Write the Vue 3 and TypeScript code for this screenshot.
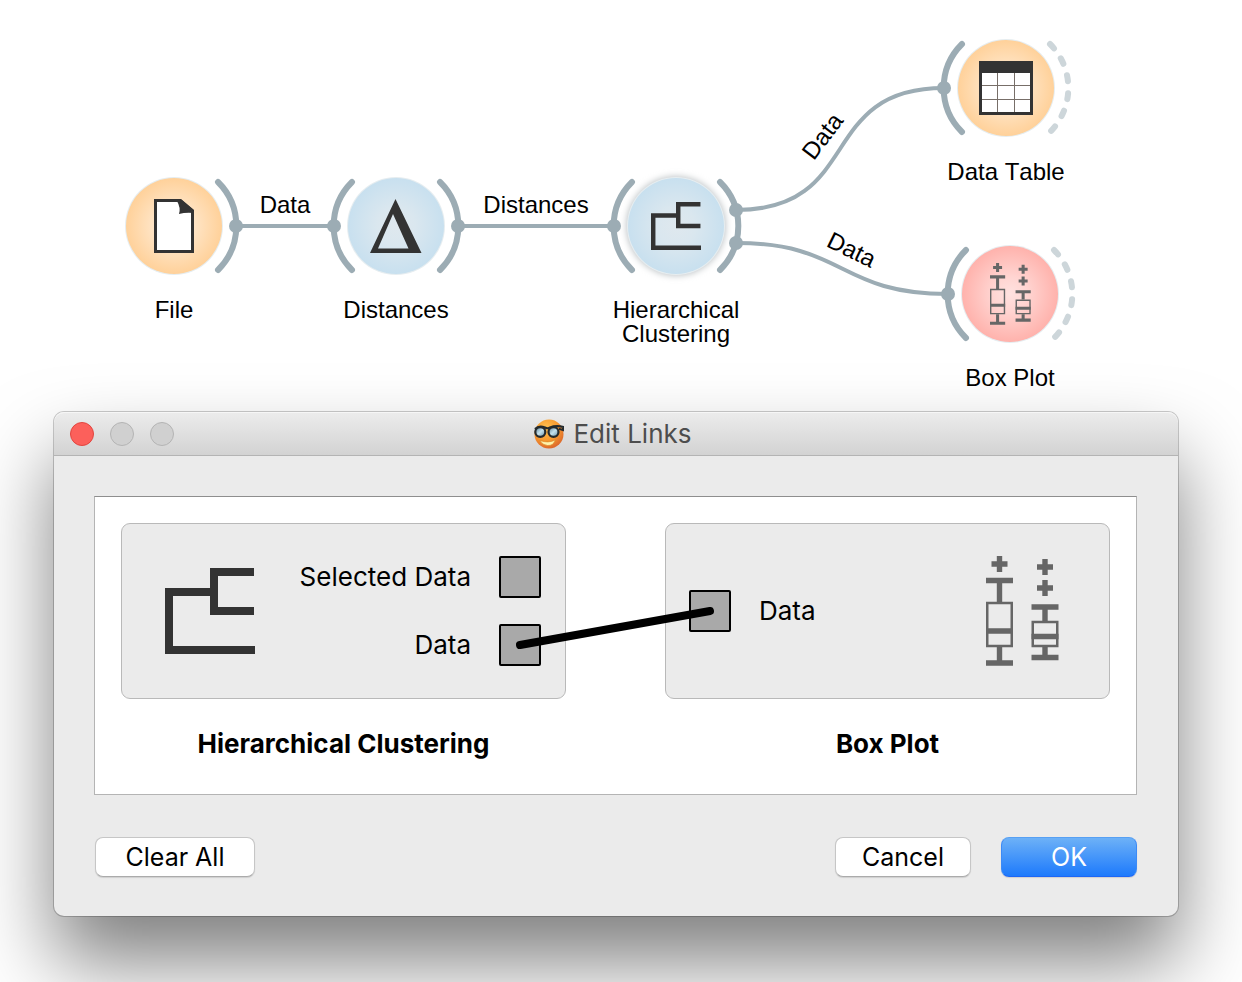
<script setup lang="ts">
type IconName = 'file' | 'delta' | 'tree' | 'table' | 'box'
type Side = 'none' | 'solid' | 'dashed'

interface CanvasNode {
  id: string
  x: number
  y: number
  tone: 'orange' | 'blue' | 'pink'
  icon: IconName
  lines: string[]
  input: boolean
  output: Side
  anchors: number[][]
  selected?: boolean
}

interface CanvasLink {
  d: string
  label: string
  labelAt: string
}

const nodes: CanvasNode[] = [
  { id: 'file', x: 174, y: 226, tone: 'orange', icon: 'file', lines: ['File'], input: false, output: 'solid', anchors: [[62, 0]] },
  { id: 'distances', x: 396, y: 226, tone: 'blue', icon: 'delta', lines: ['Distances'], input: true, output: 'solid', anchors: [[-62, 0], [62, 0]] },
  { id: 'clustering', x: 676, y: 226, tone: 'blue', icon: 'tree', lines: ['Hierarchical', 'Clustering'], input: true, output: 'solid', anchors: [[-62, 0], [60, -16], [60, 17]], selected: true },
  { id: 'table', x: 1006, y: 88, tone: 'orange', icon: 'table', lines: ['Data Table'], input: true, output: 'dashed', anchors: [[-62, 0]] },
  { id: 'box', x: 1010, y: 294, tone: 'pink', icon: 'box', lines: ['Box Plot'], input: true, output: 'dashed', anchors: [[-62, 0]] }
]

const links: CanvasLink[] = [
  { d: 'M236 226H334', label: 'Data', labelAt: 'translate(285 213)' },
  { d: 'M458 226H614', label: 'Distances', labelAt: 'translate(536 213)' },
  { d: 'M736 210C864 210 816 88 944 88', label: 'Data', labelAt: 'translate(829 141) rotate(-53)' },
  { d: 'M736 243C846 243 838 294 948 294', label: 'Data', labelAt: 'translate(848 257) rotate(26)' }
]
</script>

<template>
  <main class="page">
    <svg class="canvas" role="img" aria-label="Workflow">
      <defs>
        <radialGradient id="tone-orange">
          <stop offset="0" stop-color="#fff0dd" />
          <stop offset="0.35" stop-color="#ffe7cb" />
          <stop offset="1" stop-color="#ffd19a" />
        </radialGradient>
        <radialGradient id="tone-blue">
          <stop offset="0" stop-color="#dfe8ee" />
          <stop offset="0.4" stop-color="#dae7ef" />
          <stop offset="1" stop-color="#c8e0ef" />
        </radialGradient>
        <radialGradient id="tone-pink">
          <stop offset="0" stop-color="#ffe2e0" />
          <stop offset="0.35" stop-color="#ffd5d2" />
          <stop offset="1" stop-color="#ffb2ac" />
        </radialGradient>
        <filter id="glow" x="-20%" y="-20%" width="140%" height="140%">
          <feGaussianBlur stdDeviation="3" />
        </filter>
        <symbol id="icon-tree" viewBox="0 0 90 86">
          <path d="M90 82H4V24H49M89 4H49V43H89" fill="none" stroke="#333" stroke-width="8" />
        </symbol>
        <symbol id="icon-box" viewBox="0 0 73 110">
          <g fill="none" stroke="#666">
            <path stroke-width="5.400" d="M13.500 0V16M5.500 8H21.500M0 24.500H27M13.500 27V46M0 75H27M13.500 91V105M0 107H27" />
            <path stroke-width="5.400" d="M59 3V19M51 11H67M59 24V40M51 32H67M45.500 51H72.500M59 53V65M45.500 80.500H72.500M59 91V100M45.500 101.500H72.500" />
            <path stroke-width="2.500" d="M1.250 47H25.750V90H1.250ZM46.750 66H71.250V90H46.750Z" />
          </g>
        </symbol>
      </defs>

      <path v-for="link in links" :key="link.d" class="wire" :d="link.d" />

      <g v-for="node in nodes" :key="node.id" :transform="`translate(${node.x} ${node.y})`">
        <circle v-if="node.selected" r="50" fill="#c3c8ca" filter="url(#glow)" />
        <circle r="49" fill="#e6edf0" />
        <circle r="48" :fill="`url(#tone-${node.tone})`" />
        <path v-if="node.input" class="arc" d="M-44 -44A62 62 0 0 0 -44 44" />
        <path class="arc" :class="{ dashed: node.output === 'dashed' }" d="M44 -44A62 62 0 0 1 44 44" />
        <circle v-for="(a, i) in node.anchors" :key="i" :cx="a[0]" :cy="a[1]" r="7" fill="#9cacb4" />

        <g v-if="node.icon === 'file'">
          <path d="M-18.500 -25.500H6L18.500 -15V25.500H-18.500Z" fill="#fff" stroke="#333" stroke-width="3" />
          <path d="M3 -27H7L20 -16V-13Q12 -14 5 -12Q7 -18 3 -25Z" fill="#333" />
        </g>
        <path v-else-if="node.icon === 'delta'" fill="#333" fill-rule="evenodd" d="M-0.500 -27L25.500 27H-26ZM-3 -12L-18 22.500H12.500Z" />
        <use v-else-if="node.icon === 'tree'" href="#icon-tree" x="-25" y="-24" width="50" height="48" />
        <g v-else-if="node.icon === 'table'">
          <path d="M-27 -27H27V27H-27Z" fill="#333" />
          <path d="M-24 -15H24V24H-24Z" fill="#fff" />
          <path d="M-8.500 -15V24M8.500 -15V24M-24 -2.500H24M-24 11.500H24" stroke="#776e68" fill="none" />
        </g>
        <use v-else href="#icon-box" x="-20" y="-31" width="41" height="62" />

        <text v-for="(line, i) in node.lines" :key="line" class="caption" x="0" :y="92 + i * 24">{{ line }}</text>
      </g>

      <text v-for="link in links" :key="link.labelAt" class="caption" :transform="link.labelAt">{{ link.label }}</text>
    </svg>

    <section class="dialog" role="dialog" aria-labelledby="dialog-title">
      <header class="titlebar">
        <div class="lights">
          <button type="button" class="light close" aria-label="Close"></button>
          <button type="button" class="light" aria-label="Minimize" disabled></button>
          <button type="button" class="light" aria-label="Zoom" disabled></button>
        </div>
        <div class="title">
          <svg class="logo" viewBox="0 0 30 30" aria-hidden="true">
            <defs>
              <radialGradient id="face" cx="0.4" cy="0.3" r="0.75">
                <stop offset="0" stop-color="#ffc251" />
                <stop offset="0.55" stop-color="#f79a30" />
                <stop offset="1" stop-color="#d9622a" />
              </radialGradient>
              <linearGradient id="lens" x1="0" y1="0" x2="1" y2="1">
                <stop offset="0" stop-color="#557c93" />
                <stop offset="0.5" stop-color="#c5e2ee" />
                <stop offset="1" stop-color="#5f8ba4" />
              </linearGradient>
            </defs>
            <circle cx="15" cy="15" r="14.500" fill="url(#face)" />
            <path d="M6 21.500Q14 24.500 21.500 21Q19 27 13.500 26.500Q8 26 6 21.500Z" fill="#fff3ac" stroke="#d58320" stroke-width="0.600" />
            <path d="M1 10Q5 6 11 8.500Q14 10 16 8.500Q22 6 29.500 8L29 11Q26 10 25 10" fill="none" stroke="#252b2e" stroke-width="2.200" />
            <ellipse cx="6.300" cy="13" rx="5" ry="4.800" fill="url(#lens)" stroke="#252b2e" stroke-width="2.200" />
            <ellipse cx="19.500" cy="13" rx="5" ry="4.800" fill="url(#lens)" stroke="#252b2e" stroke-width="2.200" />
          </svg>
          <h1 id="dialog-title">Edit Links</h1>
        </div>
      </header>

      <div class="body">
        <div class="board">
          <figure class="widget">
            <div class="card source">
              <svg class="tree" aria-hidden="true"><use href="#icon-tree" /></svg>
              <div class="channels">
                <label class="channel">Selected Data<button type="button" class="port"></button></label>
                <label class="channel">Data<button type="button" class="port"></button></label>
              </div>
            </div>
            <figcaption>Hierarchical Clustering</figcaption>
          </figure>

          <figure class="widget">
            <div class="card sink">
              <label class="channel"><button type="button" class="port"></button>Data</label>
              <svg class="boxes" aria-hidden="true"><use href="#icon-box" /></svg>
            </div>
            <figcaption>Box Plot</figcaption>
          </figure>

          <svg class="connection" viewBox="0 0 200 44" aria-hidden="true">
            <path d="M5 39L195 5" stroke="#000" stroke-width="8" stroke-linecap="round" />
          </svg>
        </div>

        <footer class="actions">
          <button type="button" class="btn clear">Clear All</button>
          <button type="button" class="btn">Cancel</button>
          <button type="button" class="btn primary">OK</button>
        </footer>
      </div>
    </section>
  </main>
</template>

<style>
body {
  margin: 0;
  background: #fff;
}
</style>

<style scoped>
.page {
  box-sizing: border-box;
  min-height: 100vh;
  padding-bottom: 64px;
  overflow: hidden;
  background: #fff;
  color: #000;
  font-family: Inter, "Liberation Sans", sans-serif;
  font-size: 26px;
  line-height: 32px;
}

.canvas {
  display: block;
  width: 100%;
  height: 412px;
}

.wire {
  fill: none;
  stroke: #9cacb4;
  stroke-width: 4;
}

.arc {
  fill: none;
  stroke: #9cacb4;
  stroke-width: 6;
  stroke-linecap: round;
}

.arc.dashed {
  stroke: #cdd6da;
  stroke-dasharray: 6 12;
}

.caption {
  font-family: "Liberation Sans", Arial, sans-serif;
  font-size: 24px;
  font-kerning: none;
  text-anchor: middle;
}

.dialog {
  position: relative;
  margin: 0 64px 0 54px;
  border-radius: 10px;
  background: #ebebeb;
  box-shadow: 0 0 0 1px rgba(0, 0, 0, 0.2), 0 46px 80px rgba(0, 0, 0, 0.5);
}

.titlebar {
  display: grid;
  grid-template-columns: 1fr auto 1fr;
  align-items: center;
  box-sizing: border-box;
  height: 44px;
  padding: 0 22px 0 16px;
  border-radius: 10px 10px 0 0;
  background: linear-gradient(#ececec, #d2d2d2);
  box-shadow: inset 0 1px #f6f6f6, inset 0 -1px #b4b4b4;
}

.lights {
  display: flex;
  gap: 16px;
}

.light {
  box-sizing: border-box;
  width: 24px;
  height: 24px;
  padding: 0;
  border: 1px solid #b4b4b4;
  border-radius: 50%;
  background: #d0d0d0;
}

.light.close {
  border-color: #e2453f;
  background: #fc605b;
}

.title {
  display: flex;
  align-items: center;
  gap: 9px;
}

.logo {
  width: 30px;
  height: 30px;
}

h1 {
  margin: 0;
  color: #4d4d4d;
  font-size: 26px;
  font-weight: 400;
}

.body {
  padding: 40px 41px 39px 40px;
}

.board {
  position: relative;
  display: grid;
  grid-template-columns: 1fr 1fr;
  gap: 99px;
  padding: 26px 26px 34px;
  border: 1px solid #b4b4b4;
  border-top-color: #8e8e8e;
  background: #fff;
}

.widget {
  margin: 0;
}

.card {
  display: flex;
  align-items: center;
  justify-content: space-between;
  box-sizing: border-box;
  height: 176px;
  border: 1px solid #b9b9b9;
  border-radius: 9px;
  background: #ebebeb;
}

.source {
  padding: 0 24px 0 43px;
}

.sink {
  padding: 0 50px 0 23px;
}

.tree {
  width: 90px;
  height: 86px;
}

.boxes {
  width: 73px;
  height: 110px;
}

.channels {
  display: flex;
  flex-direction: column;
  gap: 26px;
}

.channel {
  display: flex;
  align-items: center;
  justify-content: flex-end;
  gap: 28px;
}

.port {
  box-sizing: border-box;
  width: 42px;
  height: 42px;
  padding: 0;
  border: 2px solid #000;
  border-radius: 2px;
  background: #a9a9a9;
}

figcaption {
  margin-top: 29px;
  font-weight: 700;
  text-align: center;
}

.connection {
  position: absolute;
  top: 109px;
  left: 50%;
  width: 200px;
  height: 44px;
  margin-left: -101px;
}

.actions {
  display: flex;
  gap: 30px;
  margin-top: 42px;
  padding-left: 1px;
}

.btn {
  box-sizing: border-box;
  width: 136px;
  height: 40px;
  padding: 0;
  border: 1px solid #c6c6c6;
  border-bottom-color: #ababab;
  border-radius: 8px;
  background: #fff;
  box-shadow: 0 1px 1px rgba(0, 0, 0, 0.12);
  color: #000;
  font: inherit;
  font-size: 25px;
}

.clear {
  width: 160px;
  margin-right: auto;
}

.primary {
  border-color: #57a0f3 #3c8af6 #1d66f5;
  background: linear-gradient(#6db1f7, #1d7afc);
  color: #fff;
}
</style>
